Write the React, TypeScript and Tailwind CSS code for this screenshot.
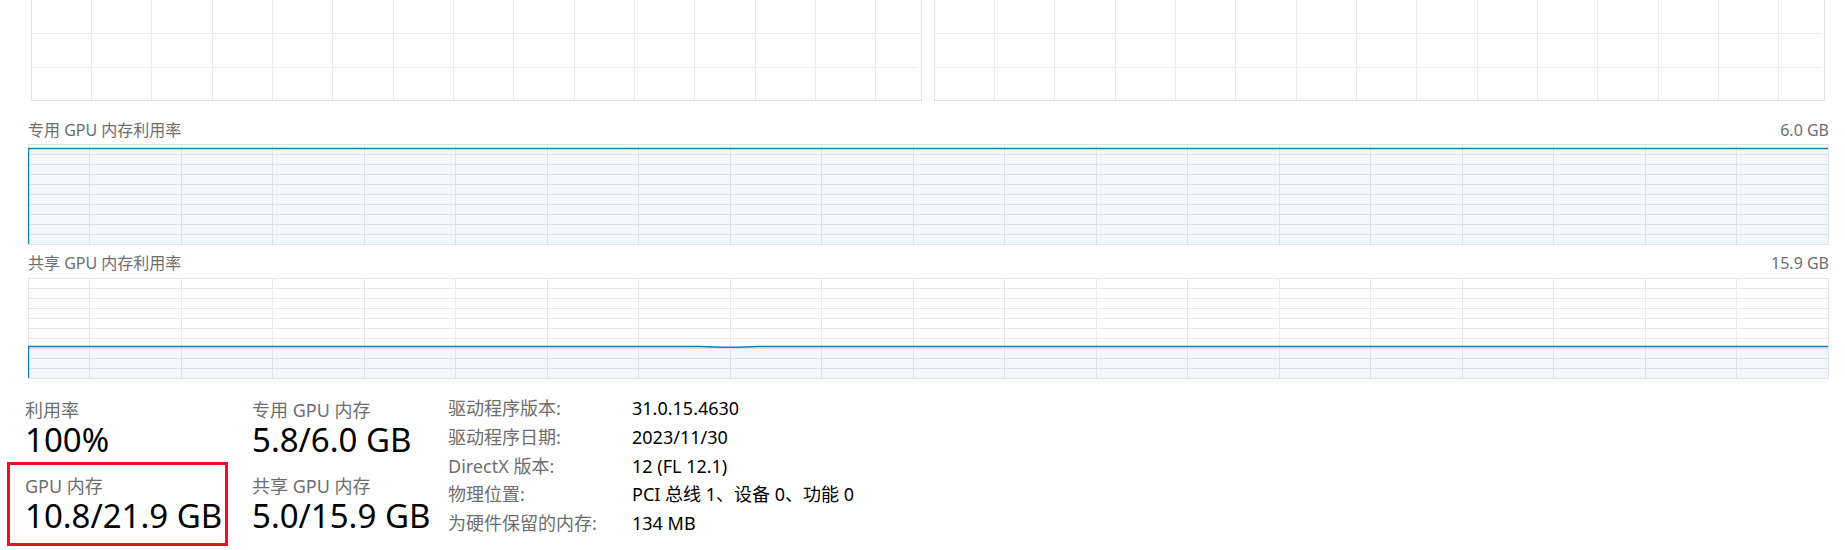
import React from 'react';

const BLUE = '#117dbb';

const TopGraph: React.FC = () => {
  const verticals: number[] = [];
  for (let k = 0; 60 + 60.33 * k < 889; k++) verticals.push(Math.round(60 + 60.33 * k) + 0.5);
  return (
    <svg width={891} height={101} className="block">
      {verticals.map((x) => (
        <line key={x} x1={x} y1={0} x2={x} y2={100} stroke="#ebebeb" />
      ))}
      <line x1={0} y1={33.5} x2={887} y2={33.5} stroke="#ebebeb" />
      <line x1={0} y1={67.5} x2={887} y2={67.5} stroke="#ebebeb" />
      <line x1={0.5} y1={0} x2={0.5} y2={101} stroke="#e3e3e3" />
      <line x1={890.5} y1={0} x2={890.5} y2={101} stroke="#e3e3e3" />
      <line x1={0} y1={100.5} x2={891} y2={100.5} stroke="#e3e3e3" />
    </svg>
  );
};

const UsageGraph: React.FC<{ line: [number, number][] }> = ({ line }) => {
  const W = 1800;
  const H = 100;
  const verticals = Array.from({ length: 19 }, (_, k) => Math.round(61 + 91.5 * k) + 0.5);
  const horizontals = Array.from({ length: 9 }, (_, k) => (k + 1) * 10 + 0.5);
  const pts = line.map(([x, y]) => `${x},${y}`).join(' ');
  return (
    <svg width={W + 1} height={H + 1} className="block">
      <rect x={0.5} y={0.5} width={W} height={H} fill="#ffffff" stroke="#e3e3e3" />
      {verticals.map((x) => (
        <line key={'v' + x} x1={x} y1={1} x2={x} y2={H} stroke="#e9e9e9" />
      ))}
      {horizontals.map((y) => (
        <line key={'h' + y} x1={1} y1={y} x2={W} y2={y} stroke="#e9e9e9" />
      ))}
      <polygon points={`${pts} ${W},${H} 0.5,${H}`} fill={BLUE} fillOpacity={0.06} />
      <polyline points={`0.5,${H} ${pts}`} fill="none" stroke={BLUE} strokeWidth={1.4} />
    </svg>
  );
};

const Stat: React.FC<{ label: string; value: string }> = ({ label, value }) => (
  <div>
    <div className="h-[22px] text-[18px] leading-[22px] text-[#6e6e6e] whitespace-nowrap">{label}</div>
    <div className="h-[38px] text-[33px] leading-[38px] text-black whitespace-nowrap">{value}</div>
  </div>
);

const details: [string, string][] = [
  ['驱动程序版本:', '31.0.15.4630'],
  ['驱动程序日期:', '2023/11/30'],
  ['DirectX 版本:', '12 (FL 12.1)'],
  ['物理位置:', 'PCI 总线 1、设备 0、功能 0'],
  ['为硬件保留的内存:', '134 MB'],
];

export default function App() {
  return (
    <div className="w-[1845px] h-[550px] bg-white overflow-hidden font-['Noto_Sans','Noto_Sans_CJK_SC',sans-serif]">
      <div className="flex gap-[12px] pl-[31px] h-[101px]">
        <TopGraph />
        <TopGraph />
      </div>

      <div className="ml-[28px] w-[1801px] h-[43px] pt-[19px] flex justify-between text-[16px] leading-[20px] text-[#6e6e6e]">
        <span>专用 GPU 内存利用率</span>
        <span>6.0 GB</span>
      </div>
      <div className="ml-[28px]">
        <UsageGraph line={[[0.5, 4.5], [1800, 4.5]]} />
      </div>

      <div className="ml-[28px] w-[1801px] h-[33px] pt-[8px] flex justify-between text-[16px] leading-[20px] text-[#6e6e6e]">
        <span>共享 GPU 内存利用率</span>
        <span>15.9 GB</span>
      </div>
      <div className="ml-[28px]">
        <UsageGraph
          line={[
            [0.5, 68.5],
            [672, 68.5],
            [694, 69.2],
            [709, 69.2],
            [730, 68.5],
            [1800, 68.5],
          ]}
        />
      </div>

      <div className="flex">
        <div className="ml-[7px] w-[221px] pt-[20px]">
          <div className="pl-[18px]">
            <Stat label="利用率" value="100%" />
          </div>
          <div className="mt-[3px] h-[84px] border-[3px] border-[#e81123] pl-[15px] pt-[10px]">
            <Stat label="GPU 内存" value="10.8/21.9 GB" />
          </div>
        </div>

        <div className="ml-[24px] w-[196px] pt-[20px]">
          <Stat label="专用 GPU 内存" value="5.8/6.0 GB" />
          <div className="pt-[16px]">
            <Stat label="共享 GPU 内存" value="5.0/15.9 GB" />
          </div>
        </div>

        <div className="pt-[15px] text-[18px] leading-[28.75px]">
          {details.map(([k, v]) => (
            <div key={k} className="flex">
              <div className="w-[184px] text-[#6e6e6e]">{k}</div>
              <div className="text-black whitespace-nowrap">{v}</div>
            </div>
          ))}
        </div>
      </div>
    </div>
  );
}
